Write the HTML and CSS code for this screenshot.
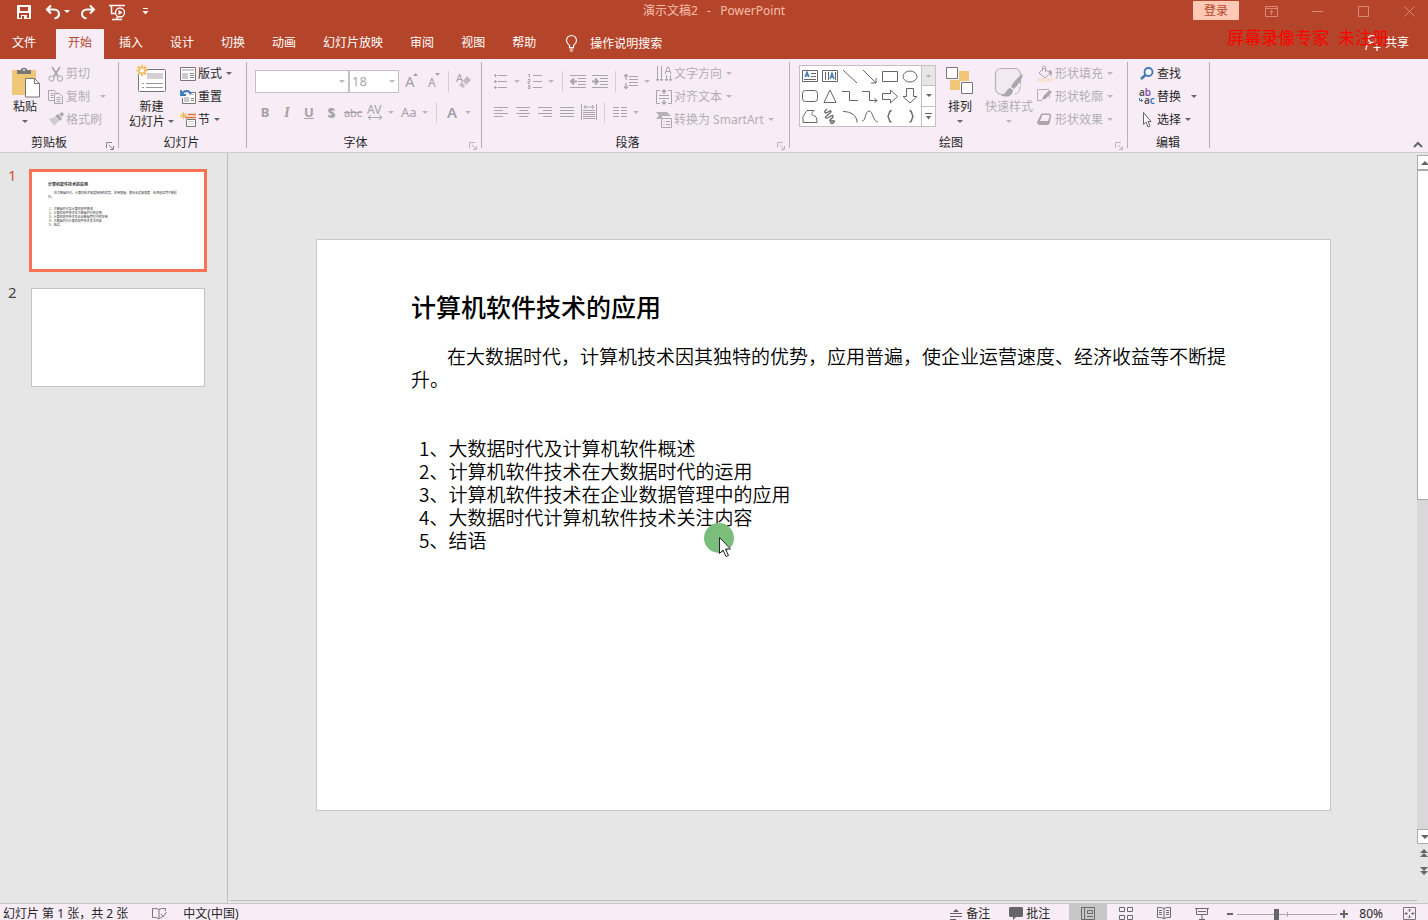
FILE: index.html
```html
<!DOCTYPE html>
<html lang="zh-CN">
<head>
    <meta charset="UTF-8">
    <meta name="viewport" content="width=device-width, initial-scale=1.0">
    <title>演示文稿2 - PowerPoint</title>
    <link rel="stylesheet" href="styles.css">
</head>
<body>
    <!-- Title bar -->
    <header class="title-bar">
        <div class="quick-access">
            <button aria-label="保存"><svg width="16" height="16" viewBox="0 0 16 16"><path d="M1.500 1.500h13v13h-13z" fill="#fff" stroke="#fff"/><path d="M4 3h8v4H4zM3 9h10v5H3z" fill="#b5452a"/><path d="M5 11h6v4H5z" fill="#fff"/><path d="M6 12h2v3H6z" fill="#b5452a"/></svg></button>
            <button class="undo" aria-label="撤消"><svg width="16" height="16" viewBox="0 0 16 16"><path d="M6 1.500 2 5.500l4 4M2.500 5.500H9c3 0 5 2 5 4.500S12 14 9.500 14.500" fill="none" stroke="#fff" stroke-width="2.200"/></svg><span class="caret"></span></button>
            <button class="redo" aria-label="恢复"><svg width="16" height="16" viewBox="0 0 16 16"><path d="m10 1.500 4 4-4 4M13.500 5.500H7c-3 0-5 2-5 4.500s2 4 4.500 4.500" fill="none" stroke="#fff" stroke-width="2"/></svg></button>
            <button class="present" aria-label="从头开始"><svg width="18" height="16" viewBox="0 0 18 16"><path d="M0 1.500h16M2.500 2v7.500H7M3 15.500h10M8 13v2" fill="none" stroke="#fff" stroke-width="1.500"/><circle cx="11" cy="8.500" r="4.500" fill="#b5452a" stroke="#fff" stroke-width="1.300"/><path d="m9.500 6 4 2.500-4 2.500z" fill="#fff"/></svg></button>
            <button class="customize" aria-label="自定义快速访问工具栏"><svg width="7" height="7" viewBox="0 0 7 7"><path d="M1 0h5v1H1zM0.500 3h6l-3 3.500z" fill="#fff"/></svg></button>
        </div>
        <h1 class="window-title">演示文稿2&nbsp;&nbsp; -&nbsp;&nbsp; PowerPoint</h1>
        <div class="window-controls">
            <button class="sign-in">登录</button>
            <button class="win-btn" aria-label="功能区显示选项"><svg width="13" height="11" viewBox="0 0 13 11"><path d="M.5.5h12v10H.5zM.5 2.500h12M6.500 9V4.500M4.500 6.500l2-2 2 2"/></svg></button>
            <button class="win-btn" aria-label="最小化"><svg width="11" height="11" viewBox="0 0 11 11"><path d="M0 5.500h11"/></svg></button>
            <button class="win-btn" aria-label="最大化"><svg width="11" height="11" viewBox="0 0 11 11"><path d="M.5.5h10v10H.5z"/></svg></button>
            <button class="win-btn" aria-label="关闭"><svg width="11" height="11" viewBox="0 0 11 11"><path d="m.5.5 10 10M10.500.5l-10 10"/></svg></button>
        </div>
    </header>

    <!-- Ribbon tabs -->
    <nav class="tabs">
        <button class="tab tab-file">文件</button>
        <button class="tab active">开始</button>
        <button class="tab">插入</button>
        <button class="tab">设计</button>
        <button class="tab">切换</button>
        <button class="tab">动画</button>
        <button class="tab">幻灯片放映</button>
        <button class="tab">审阅</button>
        <button class="tab">视图</button>
        <button class="tab">帮助</button>
        <button class="tell-me"><svg width="13" height="17" viewBox="0 0 13 17"><path d="M4.500 12.500v-2C2.500 9 1.500 7.500 1.500 5.500a5 5 0 0 1 10 0c0 2-1 3.500-3 5v2zM4.500 14h4M5 16h3" fill="none" stroke="#fff" stroke-width="1.100"/></svg>操作说明搜索</button>
        <button class="share"><svg width="16" height="17" viewBox="0 0 16 17"><circle cx="7" cy="5" r="3.500" fill="none" stroke="#fff" stroke-width="1.200"/><path d="M1 16c0-4 2-6.500 5-6.500M8.500 13.500h7M12 10v7" fill="none" stroke="#fff" stroke-width="1.200"/></svg>共享</button>
        <span class="watermark">屏幕录像专家&nbsp; 未注册</span>
    </nav>

    <!-- Ribbon -->
    <section class="ribbon">
        <div class="group group-clipboard">
            <div class="group-body">
                <button class="big-btn">
                    <svg width="32" height="32" viewBox="0 0 32 32"><path d="M3 3h24v25H3z" fill="#f0c776"/><path d="M8 3h4c0-3 6-3 6 0h4v4H8z" fill="#777"/><circle cx="15" cy="3" r="1" fill="#f8edf7"/><path d="M16.500 11.500h9l5 5v13.500h-14z" fill="#fff" stroke="#777"/><path d="M25.500 11.500v5h5" fill="none" stroke="#777"/></svg>
                    <span>粘贴</span>
                    <span class="line"><span class="caret"></span></span>
                </button>
                <div class="column">
                    <button class="small-btn" disabled><svg width="16" height="16" viewBox="0 0 16 16"><path d="m4 1 6.500 10M12 1 5.500 11" fill="none" stroke="#aaa6aa" stroke-width="1.800"/><circle cx="3.500" cy="12.500" r="2.500" fill="none" stroke="#b5b5b5" stroke-width="1.200"/><circle cx="12" cy="12.500" r="2.500" fill="none" stroke="#b5b5b5" stroke-width="1.200"/></svg>剪切</button>
                    <button class="small-btn" disabled><svg width="16" height="16" viewBox="0 0 16 16"><path d="M6 11.500H.5v-10h6l2 2M2.500 4.500h3M2.500 6.500h3M2.500 8.500h3M6.500 4.500h5l3 3v7h-8zM8.500 8.500h4M8.500 10.500h4M8.500 12.500h4" fill="none" stroke="#aaa6aa"/></svg>复制<span class="caret caret-far"></span></button>
                    <button class="small-btn" disabled><svg width="16" height="16" viewBox="0 0 16 16"><path d="m1 7 6-2 4 4-5 5z" fill="#ccc"/><path d="m7 4 3-2 4 5-2 2zM11 2l3-2 2 2-2 3z" fill="#aaa6aa"/></svg>格式刷</button>
                </div>
            </div>
            <div class="group-footer">剪贴板<button class="launcher" aria-label="剪贴板设置"><svg width="8" height="8" viewBox="0 0 8 8"><path d="M.5 6V.5H6M3 3l4 4M7.500 4v3.500H4"/></svg></button></div>
        </div>

        <div class="group group-slides">
            <div class="group-body">
                <button class="big-btn">
                    <svg width="32" height="32" viewBox="0 0 32 32"><rect x="2.500" y="2.500" width="27" height="22" rx="1" fill="#fff" stroke="#777"/><path d="M11 6h16v6H11z" fill="#d5ced5"/><path d="M6 16.500h2M10 16.500h17M6 20.500h2M10 20.500h17" stroke="#999"/><circle cx="6" cy="3.500" r="5" fill="#f8edf7"/><path d="M6-2v11M.5 3.500h11M2-.5l8 8M10-.5l-8 8" stroke="#efbc5a" stroke-width="2"/><circle cx="6" cy="3.500" r="2" fill="#fff"/></svg>
                    <span>新建</span>
                    <span class="line">幻灯片<span class="caret"></span></span>
                </button>
                <div class="column">
                    <button class="small-btn"><svg width="16" height="16" viewBox="0 0 16 16"><path d="M.5 1.500h15v13H.5z" fill="#fff" stroke="#777"/><path d="M2 3h12v2H2zM2 7h6v6H2z" fill="#cfc8cf"/><path d="M10 7.500h4M10 9.500h4M10 11.500h4" stroke="#888"/></svg>版式<span class="caret"></span></button>
                    <button class="small-btn"><svg width="16" height="16" viewBox="0 0 16 16"><path d="M10 3.500h5.500v11h-13V9" fill="#fff" stroke="#777"/><path d="M4 8h5v5H4zM9 5h5v1H9z" fill="#cfc8cf"/><path d="M11 9.500h3M11 11.500h3" stroke="#888"/><path d="M2 5c2-4 7-4 9 0M1 1v5h5" fill="none" stroke="#3b78b8" stroke-width="1.800"/></svg>重置</button>
                    <button class="small-btn"><svg width="16" height="16" viewBox="0 0 16 16"><path d="M3.500 0v7M0 3.500h7M1 1l5 5M6 1 1 6" stroke="#efbc5a"/><path d="M8 2.500h8M5 5.500h11" stroke="#e8702a" stroke-width="1.500"/><path d="M6.500 7.500h9v7h-9z" fill="#fff" stroke="#777"/><path d="M8 9.500h6M8 12h6" stroke="#ccc"/></svg>节<span class="caret"></span></button>
                </div>
            </div>
            <div class="group-footer">幻灯片</div>
        </div>

        <div class="group group-font">
            <div class="group-body rows">
                <div class="tool-row">
                    <label class="combo combo-font"><select aria-label="字体" disabled><option></option></select><span class="caret"></span></label>
                    <label class="combo combo-size"><select aria-label="字号" disabled><option>18</option></select><span class="caret"></span></label>
                    <button class="tool" disabled aria-label="增大字号"><svg width="16" height="16" viewBox="0 0 16 16"><text x="2" y="13" font-size="15">A</text><path d="m10 2 2.500-3L15 2z"/></svg></button>
                    <button class="tool" disabled aria-label="减小字号"><svg width="16" height="16" viewBox="0 0 16 16"><text x="3" y="13" font-size="12">A</text><path d="m10-1 2.500 3L15-1z"/></svg></button>
                    <span class="divider"></span>
                    <button class="tool" disabled aria-label="清除所有格式"><svg width="16" height="16" viewBox="0 0 16 16"><text x="0" y="8" font-size="11">A</text><path d="m7 7 4-5 4 4-5 5z" fill="#c0bcc0"/><path d="m6 8 3 4-2 2-4-3z" fill="#c0bcc0"/></svg></button>
                </div>
                <div class="tool-row">
                    <button class="tool bold" disabled>B</button>
                    <button class="tool italic" disabled>I</button>
                    <button class="tool underline" disabled>U</button>
                    <button class="tool shadow" disabled>S</button>
                    <button class="tool strike" disabled>abc</button>
                    <button class="tool split" disabled aria-label="字符间距"><svg width="16" height="16" viewBox="0 0 16 16"><text x="0" y="9" font-size="12">AV</text><path d="M1 12.500h14M4 10l-3 2.500L4 15M12 10l3 2.500-3 2.500" fill="none" stroke="#aaa6aa"/></svg><span class="caret"></span></button>
                    <button class="tool split letter-case" disabled><span>Aa</span><span class="caret"></span></button>
                    <span class="divider"></span>
                    <button class="tool split font-color" disabled><span>A</span><span class="caret"></span></button>
                </div>
            </div>
            <div class="group-footer">字体<button class="launcher" disabled aria-label="字体设置"><svg width="8" height="8" viewBox="0 0 8 8"><path d="M.5 6V.5H6M3 3l4 4M7.500 4v3.500H4"/></svg></button></div>
        </div>

        <div class="group group-paragraph">
            <div class="group-body">
                <div class="rows">
                    <div class="tool-row">
                        <button class="tool split" disabled aria-label="项目符号"><svg class="lines" width="16" height="16" viewBox="0 0 16 16"><path d="M5 1.500h9M5 7.500h9M5 13.500h9M1 1.500h3M1 7.500h3M1 13.500h3M2.500 0v3M2.500 6v3M2.500 12v3"/></svg><span class="caret"></span></button>
                        <button class="tool split" disabled aria-label="编号"><svg class="lines" width="16" height="16" viewBox="0 0 16 16"><path d="M6 1.500h9M6 7.500h9M6 13.500h9M1 .5h1.500v3M1 5.500h2v2H1v2h2M1 11.500h2v3H1M1 13h2"/></svg><span class="caret"></span></button>
                        <span class="divider"></span>
                        <button class="tool" disabled aria-label="减少缩进"><svg class="lines" width="16" height="16" viewBox="0 0 16 16"><path d="M0 1.500h16M8 4.500h8M8 7.500h8M8 10.500h8M0 13.500h16"/><path d="M7 7.500H1M4 4.500l-3 3 3 3" stroke-width="2"/></svg></button>
                        <button class="tool" disabled aria-label="增加缩进"><svg class="lines" width="16" height="16" viewBox="0 0 16 16"><path d="M0 1.500h16M8 4.500h8M8 7.500h8M8 10.500h8M0 13.500h16"/><path d="M0 7.500h6M3 4.500l3 3-3 3" stroke-width="2"/></svg></button>
                        <span class="divider"></span>
                        <button class="tool split" disabled aria-label="行距"><svg class="lines" width="16" height="16" viewBox="0 0 16 16"><path d="M6 2.500h9M6 5.500h9M6 8.500h9M6 11.500h9"/><path d="M3 0v6M1 2.500l2-2 2 2M3 9v6M1 12.500l2 2 2-2" stroke-width="1.300"/></svg><span class="caret"></span></button>
                    </div>
                    <div class="tool-row">
                        <button class="tool" disabled aria-label="左对齐"><svg class="lines" width="16" height="16" viewBox="0 0 16 16"><path d="M1 2.500h14M1 5.500h9M1 8.500h14M1 11.500h9"/></svg></button>
                        <button class="tool" disabled aria-label="居中"><svg class="lines" width="16" height="16" viewBox="0 0 16 16"><path d="M1 2.500h14M4 5.500h9M1 8.500h14M4 11.500h9"/></svg></button>
                        <button class="tool" disabled aria-label="右对齐"><svg class="lines" width="16" height="16" viewBox="0 0 16 16"><path d="M1 2.500h14M6 5.500h9M1 8.500h14M6 11.500h9"/></svg></button>
                        <button class="tool" disabled aria-label="两端对齐"><svg class="lines" width="16" height="16" viewBox="0 0 16 16"><path d="M1 2.500h14M1 5.500h14M1 8.500h14M1 11.500h14"/></svg></button>
                        <button class="tool" disabled aria-label="分散对齐"><svg class="lines" width="16" height="16" viewBox="0 0 16 16"><path d="M.5-1v16M15.500-1v16M2 5.500h12M2 7.500h12M2 9.500h12M2 11.500h12M2 13.500h12M3 2h10M5 0 3 2l2 2M11 0l2 2-2 2"/></svg></button>
                        <span class="divider"></span>
                        <button class="tool split" disabled aria-label="添加或删除栏"><svg class="lines" width="16" height="16" viewBox="0 0 16 16"><path d="M1 2.500h6M9 2.500h6M1 5.500h6M9 5.500h6M1 8.500h6M9 8.500h6M1 11.500h6M9 11.500h6"/></svg><span class="caret"></span></button>
                    </div>
                </div>
                <div class="column">
                    <button class="small-btn" disabled><svg class="lines" width="16" height="16" viewBox="0 0 16 16"><path d="M1.500 0v15M5.500 0v15M10.500 9v6M14.500 9v6M0 13l1.500 2L3 13M4 13l1.500 2L7 13M9 13l1.500 2 1.500-2M13 13l1.500 2 1.500-2M9 8l2.500-7h1L15 8M10 5.500h4"/></svg>文字方向<span class="caret"></span></button>
                    <button class="small-btn" disabled><svg class="lines" width="16" height="16" viewBox="0 0 16 16"><path d="M4 1.500H.5v13H4M12 1.500h3.500v13H12M3 6.500h10M3 9.500h10"/><path d="M8 5V1M6 3l2-2 2 2M8 11v4M6 13l2 2 2-2" stroke-width="1.500"/></svg>对齐文本<span class="caret"></span></button>
                    <button class="small-btn" disabled><svg width="16" height="16" viewBox="0 0 16 16"><path d="M0 0h11l4 4H6v3H0l3-3.500z" fill="#b5b1b5"/><path d="M5.500 6.500h10v9h-10z" fill="#f8edf7" stroke="#aaa6aa"/><path d="M7.500 9.500h1M10 9.500h4M7.500 12.500h1M10 12.500h4" stroke="#aaa6aa"/></svg>转换为 SmartArt<span class="caret"></span></button>
                </div>
            </div>
            <div class="group-footer">段落<button class="launcher" disabled aria-label="段落设置"><svg width="8" height="8" viewBox="0 0 8 8"><path d="M.5 6V.5H6M3 3l4 4M7.500 4v3.500H4"/></svg></button></div>
        </div>

        <div class="group group-drawing">
            <div class="group-body">
                <div class="gallery">
                    <div class="shapes">
                        <button aria-label="文本框"><svg width="18" height="18" viewBox="0 0 18 18"><path d="M1.500 3.500h15v11h-15z"/><path d="m4 10 2-5 2 5M5 8.500h2" stroke="#3b78b8" stroke-width="1.300"/><path d="M10 6.500h5M10 9.500h5M3 12.500h12"/></svg></button>
                        <button aria-label="竖排文本框"><svg width="18" height="18" viewBox="0 0 18 18"><path d="M1.500 3.500h15v11h-15zM4.500 5v8M7.500 5v8M14.500 5v8"/><path d="m9 12 2-6 2 6M10 10h2" stroke="#3b78b8" stroke-width="1.300"/></svg></button>
                        <button aria-label="直线"><svg width="18" height="18" viewBox="0 0 18 18"><path d="m2 3 14 13"/></svg></button>
                        <button aria-label="箭头"><svg width="18" height="18" viewBox="0 0 18 18"><path d="m2 3 13 13M15 11v5h-5"/></svg></button>
                        <button aria-label="矩形"><svg width="18" height="18" viewBox="0 0 18 18"><path d="M1.500 4.500h15v10h-15z"/></svg></button>
                        <button aria-label="椭圆"><svg width="18" height="18" viewBox="0 0 18 18"><ellipse cx="9" cy="9.500" rx="7" ry="5.500"/></svg></button>
                        <button aria-label="圆角矩形"><svg width="18" height="18" viewBox="0 0 18 18"><rect x="1.500" y="3.500" width="15" height="11" rx="3"/></svg></button>
                        <button aria-label="三角形"><svg width="18" height="18" viewBox="0 0 18 18"><path d="M9 3 3 15.500h12z"/></svg></button>
                        <button aria-label="肘形连接符"><svg width="18" height="18" viewBox="0 0 18 18"><path d="M1 4.500h7.500v9H17"/></svg></button>
                        <button aria-label="肘形箭头"><svg width="18" height="18" viewBox="0 0 18 18"><path d="M1 4.500h7.500v9H16M13.500 11l2.500 2.500-2.500 2.500"/></svg></button>
                        <button aria-label="右箭头"><svg width="18" height="18" viewBox="0 0 18 18"><path d="M1.500 6.500h8V3l7 6.500-7 6.500v-3.500h-8z"/></svg></button>
                        <button aria-label="下箭头"><svg width="18" height="18" viewBox="0 0 18 18"><path d="M5.500 1.500v8H2L9 16l7-6.500h-3.500v-8z"/></svg></button>
                        <button aria-label="任意多边形"><svg width="18" height="18" viewBox="0 0 18 18"><path d="M2 15.500v-6l4-6h7c-3 3-3 5 1 5.500 2 1 2 5 2 6.500z"/></svg></button>
                        <button aria-label="自由曲线"><svg width="18" height="18" viewBox="0 0 18 18"><path d="M6 2c-4 3-2 5 1 3s4-1 2 1-6 4-4 5 6-4 7-2-6 5-2 5 4-1 3 1-4 2-3 0" stroke-width="1.300"/></svg></button>
                        <button aria-label="弧形"><svg width="18" height="18" viewBox="0 0 18 18"><path d="M2 4.500c8 0 14 4 14 11"/></svg></button>
                        <button aria-label="曲线"><svg width="18" height="18" viewBox="0 0 18 18"><path d="M1 14c4 0 3-10 7-10s4 11 9 11"/></svg></button>
                        <button aria-label="左大括号"><svg width="18" height="18" viewBox="0 0 18 18"><path d="M10.500 3.500C7 3.500 9 9 6.500 9.500 9 10 7 15 10.500 15" stroke-width="1.400"/></svg></button>
                        <button aria-label="右大括号"><svg width="18" height="18" viewBox="0 0 18 18"><path d="M8.500 3.500C12 3.500 10 9 12.500 9.500 10 10 12 15 8.500 15" stroke-width="1.400"/></svg></button>
                    </div>
                    <div class="gallery-scroll">
                        <button class="up" disabled aria-label="向上"><svg width="5" height="3" viewBox="0 0 5 3"><path d="m0 3 2.500-3L5 3z" fill="#b5b1b5"/></svg></button>
                        <button aria-label="向下"><span class="caret"></span></button>
                        <button aria-label="其他形状"><svg width="7" height="7" viewBox="0 0 7 7"><path d="M0 0h7v1H0zM1 3h5L3.500 6.500z" fill="#666"/></svg></button>
                    </div>
                </div>
                <button class="big-btn arrange">
                    <svg width="32" height="32" viewBox="0 0 32 32"><path d="M15 4h10v10H15zM6 13h10v10H6z" fill="#f0c776"/><path d="M2.500.5h11v11h-11zM17.500 15.500h11v11h-11z" fill="#fff" stroke="#777"/></svg>
                    <span>排列</span>
                    <span class="line"><span class="caret"></span></span>
                </button>
                <button class="big-btn quick-styles" disabled>
                    <svg width="32" height="32" viewBox="0 0 32 32"><path d="M12 27.500H9c-4 0-6.500-3-6.500-6v-14c0-4 3-6 6-6h13c4 0 6 3 6 6v10" fill="#f1ebf1" stroke="#b5b1b5" stroke-width="1.200"/><path d="M30 7c-5 3-10 8-12 13l3 2c4-4 8-9 9-15zM17 21c-4 1-3 6-9 7 4 3 12 2 12-5z" fill="#aaa6aa"/><path d="M27 19c0 5-1 7-5 8" fill="none" stroke="#b5b1b5"/></svg>
                    <span>快速样式</span>
                    <span class="line"><span class="caret"></span></span>
                </button>
                <div class="column">
                    <button class="small-btn" disabled><svg width="16" height="16" viewBox="0 0 16 16"><path d="M0 12h16v4H0z" fill="#f8e3da"/><path d="m2 7 5-5 6 5-5 5zM5.500 5V1.500c0-2 3-2 3 0V6" fill="#f8edf7" stroke="#aaa6aa"/><path d="M12 4c3 0 4 3 2 7-1-2 0-4-2-4z" fill="#aaa6aa"/></svg>形状填充<span class="caret"></span></button>
                    <button class="small-btn" disabled><svg width="16" height="16" viewBox="0 0 16 16"><path d="M12 .5H.5v11H5M12.500 6v3" fill="none" stroke="#b5b1b5"/><path d="m5 11 1.500-4 6-6 2.500 2-6 6.500z" fill="#aaa6aa"/></svg>形状轮廓<span class="caret"></span></button>
                    <button class="small-btn" disabled><svg width="16" height="16" viewBox="0 0 16 16"><path d="m.5 9 3-6c.5-1 1-1.500 2-1.500h6c2 0 3 1 2.500 3L13 10c-.5 2-1 3-3 3H3c-2 0-3.500-2-2.500-4z" fill="#aaa6aa"/><path d="M5.500 3h6c1 0 1.500.5 1 2l-1.500 4H3z" fill="#f8edf7"/></svg>形状效果<span class="caret"></span></button>
                </div>
            </div>
            <div class="group-footer">绘图<button class="launcher" disabled aria-label="绘图设置"><svg width="8" height="8" viewBox="0 0 8 8"><path d="M.5 6V.5H6M3 3l4 4M7.500 4v3.500H4"/></svg></button></div>
        </div>

        <div class="group group-editing">
            <div class="group-body">
                <div class="column">
                    <button class="small-btn"><svg width="16" height="16" viewBox="0 0 16 16"><circle cx="9.500" cy="6" r="4" fill="#fff" stroke="#3b78b8" stroke-width="1.800"/><path d="m6.500 9-4.500 4" stroke="#3b78b8" stroke-width="2.500"/></svg>查找</button>
                    <button class="small-btn"><svg class="replace" width="16" height="16" viewBox="0 0 16 16"><text x="0" y="7">a<tspan fill="#8a4fb0">b</tspan></text><text x="5" y="15">a<tspan fill="#3b78b8">c</tspan></text><path d="M.5 9v2.500h3M2 10l1.500 1.500L2 13" fill="none" stroke="#3b78b8"/></svg>替换<span class="caret caret-far"></span></button>
                    <button class="small-btn"><svg width="16" height="16" viewBox="0 0 16 16"><path d="M4.500.5v12l2.500-2.500 2 5 2-1-2-4.500h3z" fill="#fff" stroke="#666"/></svg>选择<span class="caret"></span></button>
                </div>
            </div>
            <div class="group-footer">编辑</div>
        </div>

        <button class="collapse" aria-label="折叠功能区"><svg width="10" height="7" viewBox="0 0 10 7"><path d="m1 6 4-4 4 4" fill="none" stroke="#666" stroke-width="2"/></svg></button>
    </section>

    <!-- Slide list, canvas and scroll bar -->
    <main class="workspace">
        <aside class="slide-list">
            <div class="slide-item selected">
                <span class="number">1</span>
                <div class="thumb">
                    <h3>计算机软件技术的应用</h3>
                    <p>在大数据时代，计算机技术因其独特的优势，应用普遍，使企业运营速度、经济收益等不断提升。</p>
                    <ul>
                        <li>1、大数据时代及计算机软件概述</li>
                        <li>2、计算机软件技术在大数据时代的运用</li>
                        <li>3、计算机软件技术在企业数据管理中的应用</li>
                        <li>4、大数据时代计算机软件技术关注内容</li>
                        <li>5、结语</li>
                    </ul>
                </div>
            </div>
            <div class="slide-item">
                <span class="number">2</span>
                <div class="thumb"></div>
            </div>
        </aside>
        <section class="canvas">
            <article class="slide">
                <h2>计算机软件技术的应用</h2>
                <p>在大数据时代，计算机技术因其独特的优势，应用普遍，使企业运营速度、经济收益等不断提升。</p>
                <ul>
                    <li>1、大数据时代及计算机软件概述</li>
                    <li>2、计算机软件技术在大数据时代的运用</li>
                    <li>3、计算机软件技术在企业数据管理中的应用</li>
                    <li>4、大数据时代计算机软件技术关注内容</li>
                    <li>5、结语</li>
                </ul>
                <svg class="pointer" width="32" height="36" viewBox="0 0 32 36"><circle cx="15" cy="15" r="15" fill="#7bbd7b"/><path d="M15.500 14.500v16l3.500-3.500 3 6.500 2.500-1-3-6.500h5z" fill="#fff" stroke="#223"/></svg>
            </article>
        </section>
        <div class="scroll-bar">
            <button class="scroll-btn" aria-label="向上滚动"><svg width="8" height="4" viewBox="0 0 8 4"><path d="m0 4 4-4 4 4z"/></svg></button>
            <div class="scroll-track"><div class="scroll-thumb"></div></div>
            <button class="scroll-btn" aria-label="向下滚动"><svg width="8" height="4" viewBox="0 0 8 4"><path d="m0 0 4 4 4-4z"/></svg></button>
            <button class="page-btn" aria-label="上一张幻灯片"><svg width="8" height="8" viewBox="0 0 8 8"><path d="m0 4 4-4 4 4zM0 8l4-4 4 4z"/></svg></button>
            <button class="page-btn" aria-label="下一张幻灯片"><svg width="8" height="8" viewBox="0 0 8 8"><path d="m0 0 4 4 4-4zM0 4l4 4 4-4z"/></svg></button>
        </div>
    </main>

    <!-- Status bar -->
    <footer class="status-bar">
        <span class="slide-count">幻灯片 第 1 张，共 2 张</span>
        <button class="spelling" aria-label="拼写检查"><svg width="15" height="13" viewBox="0 0 15 13"><path d="M7 2.500C5.500 1.500 3 1.500.5 1.500v9c3 0 5 0 6.500 1.500M7 2.500C8 1.500 10 1.500 13.500 1.500V4M7 2.500V12c1-1 2-1.500 3-1.500M9 7l2 3 3.500-5" fill="none" stroke="#777"/></svg></button>
        <button class="language">中文(中国)</button>
        <div class="status-right">
            <button class="status-btn"><svg width="12" height="12" viewBox="0 0 12 12"><path d="m3 4 3-3 3 3z" fill="#666"/><path d="M0 5.500h12M0 8.500h12M0 11.500h6" stroke="#666"/></svg>备注</button>
            <button class="status-btn comments"><svg width="14" height="13" viewBox="0 0 14 13"><path d="M1 0h12l1 1v8l-1 1H7l-3 3v-3H1L0 9V1z" fill="#666"/></svg>批注</button>
            <button class="view-btn active" aria-label="普通视图"><svg width="14" height="13" viewBox="0 0 14 13"><path d="M.5.5h13v12H.5zM3.500.5v12M6.500 3.500h5v3h-5zM6 9.500h6"/></svg></button>
            <button class="view-btn" aria-label="幻灯片浏览"><svg width="14" height="13" viewBox="0 0 14 13"><path d="M.5.5h5v4h-5zM8.500.5h5v4h-5zM.5 8.500h5v4h-5zM8.500 8.500h5v4h-5z"/></svg></button>
            <button class="view-btn" aria-label="阅读视图"><svg width="14" height="13" viewBox="0 0 14 13"><path d="M6.500 1.500C5 .5 3 .5.5.5v10c3 0 5 0 6.500 1.500 1-1.500 3-1.500 6.500-1.500V.5C10 .5 8.500.5 6.500 1.500zM7 1v11M2 3.500h3M2 5.500h3M2 7.500h3M9 3.500h3M9 5.500h3M9 7.500h3"/></svg></button>
            <button class="view-btn" aria-label="幻灯片放映"><svg width="14" height="13" viewBox="0 0 14 13"><path d="M0 1.500h14M1.500 2v5.500h11V2M3 4.500h8M7 8v4.500M4 12.500h6"/></svg></button>
            <button class="zoom-btn zoom-out" aria-label="缩小"><svg width="8" height="8" viewBox="0 0 8 8"><path d="M1 3h6v2H1z" fill="#666"/></svg></button>
            <input class="zoom-slider" type="range" min="0" max="100" value="39" aria-label="缩放">
            <button class="zoom-btn" aria-label="放大"><svg width="8" height="8" viewBox="0 0 8 8"><path d="M0 3h8v2H0zM3 0h2v8H3z" fill="#666"/></svg></button>
            <button class="zoom-value">80%</button>
            <button class="fit" aria-label="使幻灯片适应当前窗口"><svg width="13" height="13" viewBox="0 0 13 13"><path d="M.5.5h12v12H.5zM6.500 2v3M5 3.500l1.500-1.500L8 3.500M6.500 8v3M5 9.500l1.500 1.500L8 9.500M2 6.500h3M3.500 5 2 6.500 3.500 8M8 6.500h3M9.500 5l1.500 1.500L9.500 8" fill="none" stroke="#777"/></svg></button>
        </div>
    </footer>
</body>
</html>
```

FILE: styles.css
```css
:root {
    --brand: #b5452a;
    --ribbon: #f8edf7;
    --line: #c6c0c6;
    --muted: #b3adb5;
    --text: #262626;
}

* {
    box-sizing: border-box;
    margin: 0;
    padding: 0;
}

body {
    display: flex;
    flex-direction: column;
    height: 100vh;
    overflow: hidden;
    font-family: "Noto Sans", "Noto Sans CJK SC", sans-serif;
    font-size: 12px;
    line-height: 15px;
    color: var(--text);
    background: #e6e6e6;
}

button {
    display: flex;
    align-items: center;
    border: none;
    background: none;
    font: inherit;
    color: inherit;
    white-space: nowrap;
}

button:disabled {
    color: var(--muted);
}

svg {
    flex: none;
    overflow: visible;
}

ul {
    list-style: none;
}

.caret {
    flex: none;
    border: 3px solid transparent;
    border-top-color: #666;
    border-bottom: none;
}

:disabled .caret,
.combo .caret {
    border-top-color: #bdb7bd;
}

/* Title bar */
.title-bar {
    display: grid;
    grid-template-columns: 1fr auto 1fr;
    flex: none;
    height: 29px;
    background: var(--brand);
}

.quick-access {
    display: flex;
    align-items: center;
    padding: 0 0 6px 16px;
}

.quick-access .caret {
    border-top-color: #fff;
}

.undo {
    gap: 3px;
    margin-left: 13px;
}

.redo {
    margin-left: 10px;
}

.present {
    margin-left: 13px;
}

.customize {
    margin-left: 15px;
}

.window-title {
    padding-top: 3px;
    font-size: 12px;
    font-weight: 400;
    color: #f8bfae;
}

.window-controls {
    display: flex;
    justify-content: flex-end;
    margin-right: -4px;
    padding: 1px 0 8px;
}

.sign-in {
    justify-content: center;
    width: 46px;
    height: 19px;
    margin-right: 9px;
    border-radius: 1px;
    background: #ffc9b5;
    color: var(--brand);
}

.win-btn {
    justify-content: center;
    width: 46px;
}

.win-btn svg {
    fill: none;
    stroke: #d98a76;
}

/* Tabs */
.tabs {
    position: relative;
    display: flex;
    flex: none;
    gap: 3px;
    height: 30px;
    background: var(--brand);
    color: #fff;
}

.tab {
    padding: 0 12px 3px;
}

.tab-file {
    margin-right: 5px;
}

.tab.active {
    background: var(--ribbon);
    color: var(--brand);
}

.tell-me {
    gap: 12px;
    padding: 0 14px 1px;
}

.share {
    gap: 4px;
    margin-left: auto;
    padding: 0 19px 3px 0;
}

.watermark {
    position: absolute;
    top: 0;
    right: 39px;
    font-size: 17px;
    line-height: 18px;
    color: #f00;
}

/* Ribbon */
.ribbon {
    display: flex;
    flex: none;
    height: 94px;
    padding: 3px 0 4px;
    border-bottom: 1px solid #d2cbd2;
    background: var(--ribbon);
}

.group {
    display: flex;
    flex: none;
    flex-direction: column;
    border-right: 1px solid #b5b0b5;
}

.group-clipboard {
    width: 119px;
    padding-left: 4px;
}

.group-slides {
    width: 128px;
    padding-left: 6px;
}

.group-font {
    width: 235px;
    padding-left: 7px;
}

.group-paragraph {
    width: 308px;
    padding-left: 8px;
}

.group-drawing {
    width: 338px;
    padding-left: 9px;
}

.group-editing {
    width: 82px;
    padding-left: 11px;
}

.group-body {
    display: flex;
    flex: none;
    gap: 2px;
    height: 69px;
}

.group-footer {
    position: relative;
    flex: 1;
    padding: 4px 24px 0 0;
    text-align: center;
}

.group-slides .group-footer {
    padding-right: 8px;
}

.group-editing .group-footer {
    padding-right: 12px;
}

.launcher {
    position: absolute;
    right: 4px;
    bottom: 0;
}

.launcher svg {
    fill: none;
    stroke: #888;
}

.launcher:disabled svg {
    stroke: #bdb7bd;
}

.big-btn {
    flex-direction: column;
    min-width: 42px;
    padding-top: 5px;
}

.group-slides .big-btn {
    width: 53px;
}

.big-btn .line {
    display: flex;
    align-items: center;
    gap: 3px;
    height: 15px;
}

.column {
    display: flex;
    flex-direction: column;
}

.small-btn {
    gap: 2px;
    height: 23px;
}

.small-btn .caret {
    margin-left: 2px;
}

.small-btn .caret-far {
    margin-left: 8px;
}

.rows {
    display: flex;
    flex-direction: column;
    gap: 8px;
    padding-top: 8px;
}

.group-paragraph .rows {
    width: 164px;
}

.tool-row {
    display: flex;
    align-items: center;
    height: 23px;
}

.combo {
    position: relative;
    height: 23px;
}

.combo select {
    width: 100%;
    height: 100%;
    padding: 0 2px;
    border: 1px solid var(--line);
    background: #fff;
    font: inherit;
    font-size: 13px;
    color: #aaa;
    opacity: 1;
    appearance: none;
}

.combo .caret {
    position: absolute;
    top: 10px;
    right: 4px;
}

.combo-font {
    width: 94px;
    margin-left: 1px;
}

.combo-size {
    width: 50px;
    margin-right: 1px;
}

.tool {
    justify-content: center;
    width: 22px;
    height: 22px;
    font-size: 13px;
}

.tool:disabled {
    color: #a5a0a5;
}

.tool svg {
    fill: #a5a0a5;
}

.split {
    justify-content: flex-start;
    gap: 5px;
    width: 34px;
    padding-left: 3px;
}

.lines,
.tool .lines {
    fill: none;
    stroke: #aaa5aa;
}

.bold,
.shadow,
.underline {
    font-weight: 700;
}

.italic {
    font-family: "Liberation Serif", serif;
    font-size: 15px;
    font-style: italic;
    font-weight: 700;
}

.underline {
    text-decoration: underline;
}

.shadow {
    text-shadow: 1px 1px 1px #aaa;
}

.strike {
    font-size: 11px;
    text-decoration: line-through;
}

.font-color span:first-child {
    width: 16px;
    font-size: 15px;
    font-weight: 600;
}

.divider {
    width: 1px;
    height: 21px;
    margin: 0 4px;
    background: #d5ced5;
}

.replace {
    fill: #555;
    font-size: 10px;
    font-weight: 600;
}

/* Shape gallery */
.gallery {
    display: flex;
    width: 137px;
    height: 62px;
    margin-top: 3px;
    border: 1px solid var(--line);
    background: #fff;
}

.shapes {
    display: grid;
    flex: 1;
    grid-template-columns: repeat(6, 20px);
    grid-auto-rows: 20px;
}

.shapes button {
    justify-content: center;
}

.shapes svg {
    fill: none;
    stroke: #666;
}

.gallery-scroll {
    display: flex;
    flex-direction: column;
    width: 14px;
    border-left: 1px solid var(--line);
}

.gallery-scroll button {
    flex: 1;
    justify-content: center;
}

.gallery-scroll button + button {
    border-top: 1px solid var(--line);
}

.gallery-scroll .up {
    background: #e6e6e6;
}

.arrange {
    margin-left: 1px;
}

.quick-styles {
    width: 52px;
}

.collapse {
    align-self: flex-end;
    margin-left: auto;
    padding-right: 5px;
}

/* Workspace */
.workspace {
    display: flex;
    flex: 1;
    min-height: 0;
}

.slide-list {
    flex: none;
    width: 228px;
    padding-top: 16px;
    border-right: 1px solid #bdbdbd;
}

.slide-item {
    display: flex;
    margin-bottom: 14px;
}

.number {
    width: 29px;
    padding-left: 8px;
    font-size: 15px;
    line-height: 13px;
    color: #444;
}

.selected .number {
    color: #d9532f;
}

.thumb {
    width: 174px;
    height: 99px;
    margin: 2px;
    border: 1px solid #c3c3c3;
    background: #fff;
    font-family: "Noto Sans CJK SC", sans-serif;
    font-size: 3px;
    line-height: 4px;
    color: #333;
}

.selected .thumb {
    width: 178px;
    height: 103px;
    margin: 0;
    padding: 10px 16px;
    border: 3px solid #fa7252;
}

.thumb h3 {
    margin-bottom: 4px;
    font-size: 4px;
    line-height: 5px;
}

.thumb p {
    width: 130px;
    margin-bottom: 8px;
    text-indent: 6px;
}

.thumb ul {
    padding-left: 1px;
}

.canvas {
    display: flex;
    flex: 1;
    align-items: center;
    margin: 0 0 2px 2px;
    padding: 0 86px 4px;
    border-bottom: 1px solid #bdbdbd;
}

.slide {
    position: relative;
    width: 100%;
    aspect-ratio: 1015 / 572;
    padding: 48px 94px;
    border: 1px solid #c8c8c8;
    background: #fff;
    font-family: "Noto Sans CJK SC", sans-serif;
    font-size: 19px;
    font-weight: 350;
    line-height: 23px;
    color: #000;
}

.slide h2 {
    margin-bottom: 20px;
    font-size: 25px;
    font-weight: 500;
    line-height: 36px;
}

.slide p {
    margin-bottom: 46px;
    text-indent: 36px;
}

.slide ul {
    padding-left: 8px;
}

.pointer {
    position: absolute;
    top: 283px;
    left: 387px;
}

.scroll-bar {
    display: flex;
    flex: none;
    flex-direction: column;
    width: 11px;
    padding: 2px 0 23px;
}

.scroll-bar svg {
    fill: #666;
}

.scroll-btn {
    flex: none;
    height: 15px;
    padding-left: 3px;
    border: 1px solid #ababab;
    border-right: none;
    background: #fff;
}

.scroll-track {
    flex: 1;
    background: #dad7da;
}

.scroll-thumb {
    height: 50%;
    border: 1px solid #ababab;
    border-right: none;
    background: #fff;
}

.page-btn {
    height: 18px;
    padding-left: 3px;
}

/* Status bar */
.status-bar {
    display: flex;
    flex: none;
    align-items: center;
    height: 17px;
    padding-left: 3px;
    border-top: 1px solid #c6c6c6;
    background: var(--ribbon);
    line-height: 13px;
}

.status-bar > * {
    margin-top: 3px;
}

.spelling {
    margin-left: 24px;
}

.language {
    margin-left: 16px;
}

.status-bar .status-right {
    display: flex;
    align-items: center;
    height: 16px;
    margin: 0 12px 0 auto;
}

.status-btn {
    gap: 4px;
    padding-top: 3px;
}

.comments {
    gap: 3px;
    margin: 0 19px;
}

.view-btn {
    justify-content: center;
    width: 38px;
    height: 16px;
    padding-top: 3px;
}

.view-btn.active {
    background: #c6c6c6;
}

.view-btn svg {
    fill: none;
    stroke: #6a6a6a;
}

.zoom-btn {
    margin-left: 3px;
    padding-top: 4px;
}

.zoom-out {
    margin-left: 5px;
}

.zoom-slider {
    width: 100px;
    height: 11px;
    margin: 4px 0 0 3px;
    background: linear-gradient(#aaa, #aaa) 50px 50% / 1px 5px no-repeat, linear-gradient(#aaa, #aaa) 0 50% / 100% 1px no-repeat;
    appearance: none;
}

.zoom-slider::-webkit-slider-thumb {
    width: 5px;
    height: 11px;
    background: #666;
    appearance: none;
}

.zoom-value {
    margin-left: 11px;
    padding-top: 3px;
}

.fit {
    margin-left: 20px;
    padding-top: 3px;
}
```
